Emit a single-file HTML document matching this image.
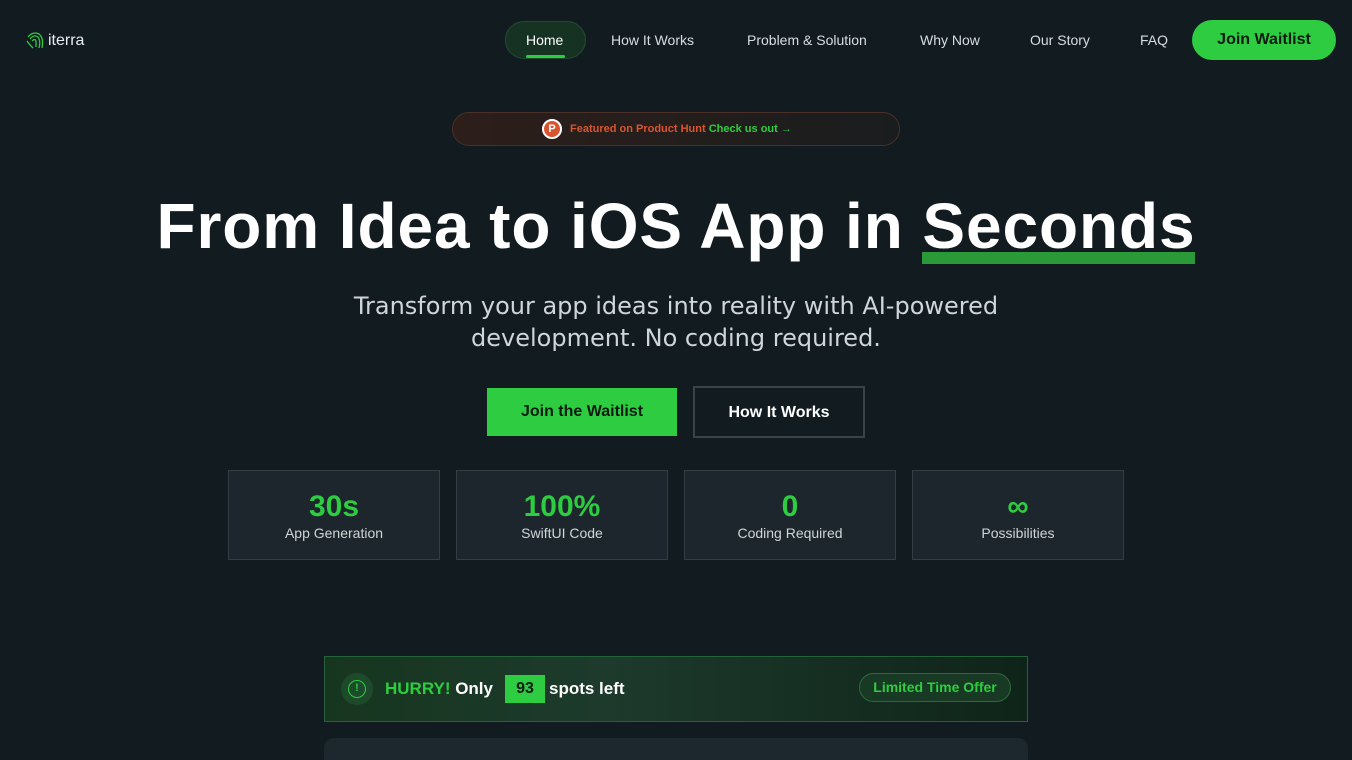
<!DOCTYPE html>
<html><head><meta charset="utf-8"><style>
*{margin:0;padding:0;box-sizing:border-box}
html,body{width:1352px;height:760px;overflow:hidden}
body{background:#121b20;font-family:"Liberation Sans","DejaVu Sans",sans-serif;color:#fff;position:relative}
.abs{position:absolute}
.nav a{position:absolute;top:32px;font-size:14px;color:#d8dde0;white-space:nowrap}
.stat{position:absolute;top:470px;width:212px;height:90px;background:#1c262c;border:1px solid #323d44;text-align:center}
.stat b{display:block;margin-top:18px;font-size:30px;color:#2ecc40;line-height:36px}
.stat span{display:block;font-size:14px;color:#d0d5d8;margin-top:0px}
</style></head><body>
<svg class="abs" style="left:25px;top:29px" width="22" height="22" viewBox="0 0 22 22"><g fill="none" stroke="#2ecc40" stroke-width="1.3"><path d="M3 8 Q8 2 14 5 Q19 9 17 19"/><path d="M5 10 Q9 5 13 8 Q16 12 14 19"/><path d="M7 12 Q10 9 11 12 L11 18"/><path d="M2 12 Q4 15 8 19"/></g></svg>
<div class="abs" style="left:48px;top:32px;font-size:16px;color:#e8ecee">iterra</div>
<div class="abs" style="left:505px;top:21px;width:81px;height:38px;border-radius:19px;background:#163222;border:1px solid #234a31"></div>
<div class="abs" style="left:526px;top:55px;width:39px;height:3px;background:#2ecc40;border-radius:2px"></div>
<div class="nav">
<a style="left:526px;color:#fff">Home</a>
<a style="left:611px">How It Works</a>
<a style="left:747px">Problem &amp; Solution</a>
<a style="left:920px">Why Now</a>
<a style="left:1030px">Our Story</a>
<a style="left:1140px">FAQ</a>
</div>
<div class="abs" style="left:1192px;top:20px;width:144px;height:40px;border-radius:20px;background:#2ecc40;color:#0c1a10;font-weight:bold;font-size:16px;text-align:center;line-height:40px">Join Waitlist</div>

<div class="abs" style="left:452px;top:112px;width:448px;height:34px;border-radius:17px;background:linear-gradient(90deg,#2d1e1a,#1a1d1e);border:1px solid #4a3028"></div>
<div class="abs" style="left:542px;top:119px;width:20px;height:20px;border-radius:50%;background:#da552f;border:2px solid #fff;color:#fff;font-size:11px;font-weight:bold;text-align:center;line-height:16px">P</div>
<div class="abs" style="left:570px;top:123px;font-size:11px;font-weight:bold;color:#da552f;white-space:nowrap">Featured on Product Hunt <span style="color:#2ecc40">Check us out →</span></div>

<div class="abs" style="left:0;width:1352px;top:188px;text-align:center;font-size:64px;font-weight:bold;letter-spacing:0.9px;white-space:nowrap;line-height:76px">From Idea to iOS App in <span style="position:relative">Seconds<span style="position:absolute;left:0;right:0;bottom:-2px;height:12px;background:#2a9a38;z-index:-1"></span></span></div>

<div class="abs" style="left:0;width:1352px;top:290px;text-align:center;font-size:24px;color:#cfd5d8;line-height:32px;font-family:'DejaVu Sans',sans-serif">Transform your app ideas into reality with AI-powered<br>development. No coding required.</div>

<div class="abs" style="left:487px;top:388px;width:190px;height:48px;background:#2ecc40;color:#0c1a10;font-weight:bold;font-size:16px;text-align:center;line-height:48px">Join the Waitlist</div>
<div class="abs" style="left:693px;top:386px;width:172px;height:52px;border:2px solid #38434a;color:#fff;font-weight:bold;font-size:16px;text-align:center;line-height:50px">How It Works</div>

<div class="stat" style="left:228px"><b>30s</b><span>App Generation</span></div>
<div class="stat" style="left:456px"><b>100%</b><span>SwiftUI Code</span></div>
<div class="stat" style="left:684px"><b>0</b><span>Coding Required</span></div>
<div class="stat" style="left:912px"><b>∞</b><span>Possibilities</span></div>

<div class="abs" style="left:324px;top:656px;width:704px;height:66px;background:linear-gradient(90deg,#17361f,#1d3a2c 40%,#0f2419);border:1px solid #25623a"></div>
<div class="abs" style="left:341px;top:673px;width:32px;height:32px;border-radius:50%;background:#1d4a2a"></div>
<div class="abs" style="left:348px;top:680px;width:18px;height:18px;border-radius:50%;border:1.5px solid #2ecc40;color:#2ecc40;font-size:11px;text-align:center;line-height:15px;font-weight:bold">!</div>
<div class="abs" style="left:385px;top:679px;font-size:17px;font-weight:bold;color:#2ecc40;white-space:nowrap">HURRY! <span style="color:#fff">Only</span></div>
<div class="abs" style="left:505px;top:675px;width:40px;height:28px;background:#2ecc40;color:#0c1a10;font-size:16px;font-weight:bold;text-align:center;line-height:28px">93</div>
<div class="abs" style="left:549px;top:679px;font-size:17px;font-weight:bold;color:#fff">spots left</div>
<div class="abs" style="left:859px;top:673px;width:152px;height:29px;border-radius:15px;background:#183a24;border:1px solid #2a6a3c;color:#2ecc40;font-size:14px;font-weight:bold;text-align:center;line-height:27px">Limited Time Offer</div>
<div class="abs" style="left:324px;top:738px;width:704px;height:22px;border-radius:10px 10px 0 0;background:#1c282d"></div>
</body></html>
